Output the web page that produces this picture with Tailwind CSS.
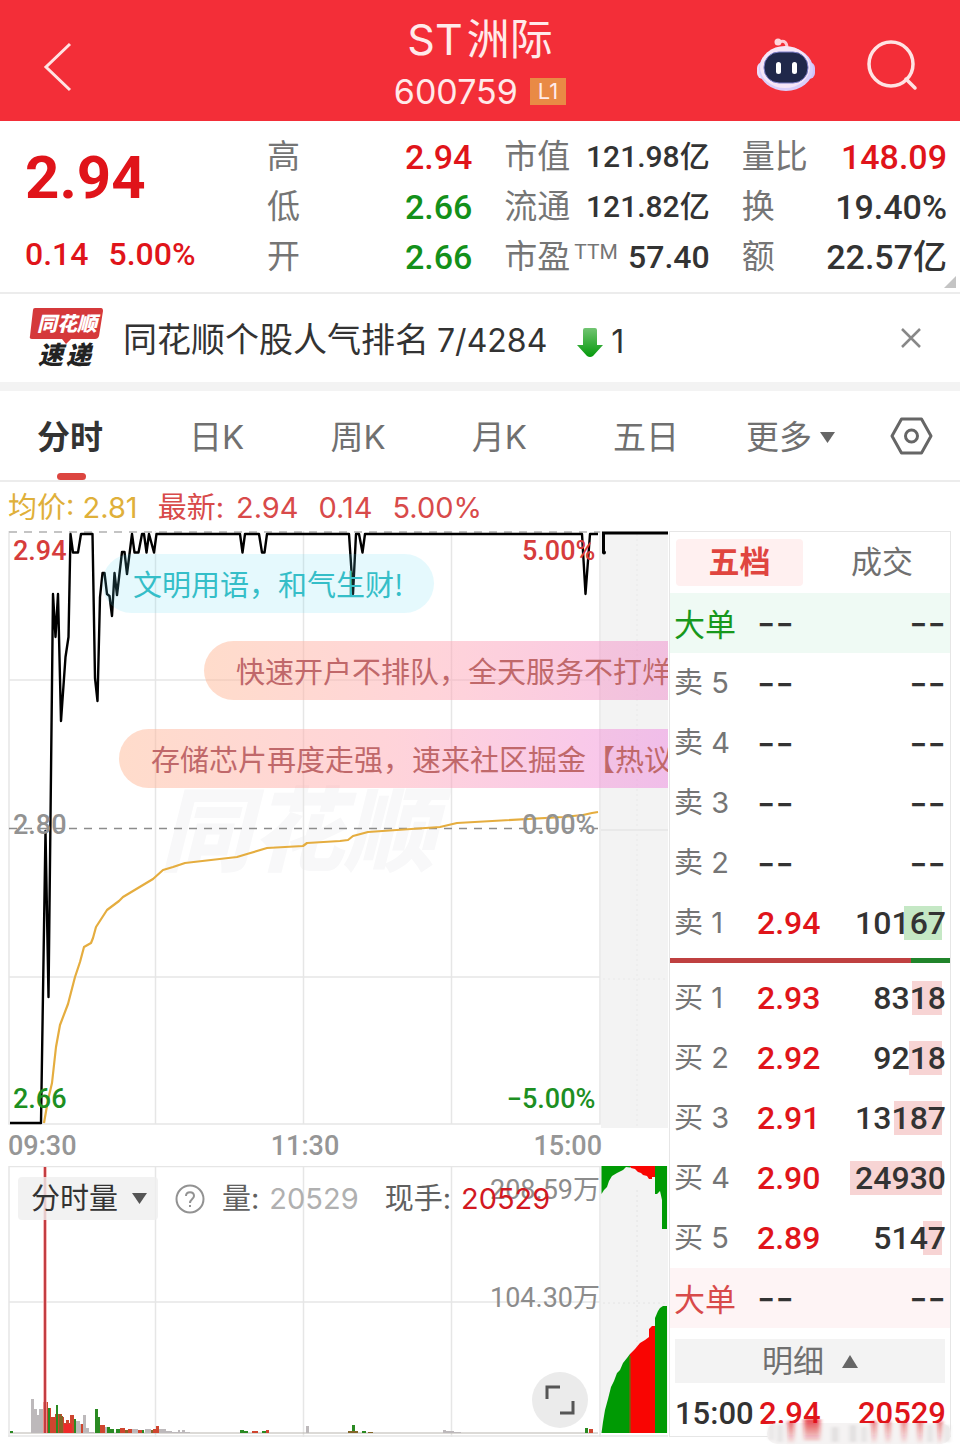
<!DOCTYPE html>
<html lang="zh-CN">
  <head>
    <meta charset="UTF-8" />
    <meta name="viewport" content="width=device-width, initial-scale=1.0" />
    <title>ST洲际 600759</title>

    <script src="https://cdn.jsdelivr.net/npm/@tailwindcss/browser@4"></script>
  </head>
  <body class="bg-white font-['Inter','Noto_Sans_CJK_SC',sans-serif] text-[#333]">
    <!-- Header -->
    <header class="grid h-[121px] grid-cols-[1fr_auto_1fr] items-center bg-[#f32e38] text-white">
      <button aria-label="返回" class="ml-[42px] mt-3 justify-self-start">
        <svg width="32" height="52" viewBox="0 0 32 52" fill="none" stroke="#ffe3e3" stroke-width="3"><path d="M28 3 4 26 28 49" /></svg>
      </button>
      <div class="flex flex-col items-center pt-2 text-[#ffeaea]">
        <h1 class="text-[43px] leading-[54px]">ST<span class="ml-1">洲际</span></h1>
        <div class="flex items-center gap-3">
          <span class="text-[34px] leading-[52px]">600759</span>
          <span class="bg-[#e98a45] px-2 text-[22px] leading-[27px]">L1</span>
        </div>
      </div>
      <div class="mt-2 mr-[42px] flex items-center gap-[50px] justify-self-end">
        <button aria-label="智能助手">
          <svg width="60" height="56" viewBox="0 0 60 56">
            <path d="M23 5C29 3 31 6 31 11" fill="none" stroke="#ffc9d4" stroke-width="3" />
            <circle cx="22" cy="5" r="3.5" fill="#ffd5dc" />
            <rect x="1" y="25" width="12" height="17" rx="6" fill="#eedcf8" />
            <rect x="47" y="25" width="12" height="17" rx="6" fill="#cfc3fb" />
            <ellipse cx="30" cy="32" rx="27" ry="22" fill="#d9cffb" />
            <ellipse cx="29" cy="30" rx="25" ry="21" fill="#f6e6f7" />
            <rect x="8" y="15" width="44" height="31" rx="15" fill="#20284a" stroke="#7d7fc9" stroke-width="1" />
            <rect x="20" y="25" width="5" height="12" rx="2.5" fill="#fff" />
            <rect x="36" y="25" width="5" height="12" rx="2.5" fill="#fff" />
          </svg>
        </button>
        <button aria-label="搜索">
          <svg width="52" height="52" viewBox="0 0 52 52" fill="none" stroke="#ffe3e3" stroke-width="3.5"><circle cx="25" cy="25" r="22" /><path d="m40 40 9 9" stroke-linecap="round" /></svg>
        </button>
      </div>
    </header>

    <!-- Quote -->
    <section class="relative grid h-[173px] grid-cols-[210px_1fr_1fr_1fr] gap-x-8 border-b-2 border-[#ececec] pt-[11px] pr-[13px] pl-[25px] font-['Roboto','Noto_Sans_CJK_SC',sans-serif] font-medium">
      <div class="flex flex-col gap-6 pt-[14px] text-[#e0141a]">
        <strong class="text-[60px] leading-[64px] font-bold">2.94</strong>
        <p class="flex gap-5 text-[32px] leading-[40px]"><span>0.14</span><span>5.00%</span></p>
      </div>
      <dl class="text-[34px] leading-[50px]">
        <div class="flex justify-between"><dt class="text-[33px] font-normal text-[#757575]">高</dt><dd class="text-[#e0141a]">2.94</dd></div>
        <div class="flex justify-between"><dt class="text-[33px] font-normal text-[#757575]">低</dt><dd class="text-[#13901a]">2.66</dd></div>
        <div class="flex justify-between"><dt class="text-[33px] font-normal text-[#757575]">开</dt><dd class="text-[#13901a]">2.66</dd></div>
      </dl>
      <dl class="text-[30px] leading-[50px]">
        <div class="flex justify-between whitespace-nowrap"><dt class="text-[33px] font-normal text-[#757575]">市值</dt><dd>121.98亿</dd></div>
        <div class="flex justify-between whitespace-nowrap"><dt class="text-[33px] font-normal text-[#757575]">流通</dt><dd>121.82亿</dd></div>
        <div class="flex justify-between whitespace-nowrap"><dt class="flex text-[33px] font-normal text-[#757575]">市盈<span class="ml-1 text-[21px] leading-[40px]">TTM</span></dt><dd class="text-[32px]">57.40</dd></div>
      </dl>
      <dl class="text-[34px] leading-[50px]">
        <div class="flex justify-between"><dt class="text-[33px] font-normal text-[#757575]">量比</dt><dd class="text-[#e0141a]">148.09</dd></div>
        <div class="flex justify-between"><dt class="text-[33px] font-normal text-[#757575]">换</dt><dd>19.40%</dd></div>
        <div class="flex justify-between"><dt class="text-[33px] font-normal text-[#757575]">额</dt><dd>22.57亿</dd></div>
      </dl>
      <svg class="absolute right-1 bottom-1" width="12" height="12" viewBox="0 0 12 12"><path d="M12 0V12H0Z" fill="#c4c4c4" /></svg>
    </section>

    <!-- Popularity notice -->
    <section class="flex h-[97px] items-center border-b-[9px] border-[#f3f3f3] pr-[38px] pl-[29px]">
      <svg width="76" height="68" viewBox="0 0 76 68" class="mr-[18px] overflow-visible font-['Noto_Sans_CJK_SC'] font-black italic">
        <path d="M6 4H72Q74 4 74 7L70 32Q69 35 66 35H42L37 40 33 35H3Q0 35 1 32L4 6Q4 4 6 4Z" fill="#d5393b" />
        <text x="8" y="27" font-size="20" fill="#fff">同花顺</text>
        <text x="9" y="60" font-size="25" fill="#222">速</text>
        <text x="37" y="60" font-size="25" fill="#222">递</text>
      </svg>
      <p class="pt-1 text-[34px] leading-[44px] whitespace-nowrap">同花顺个股人气排名<span class="ml-2 text-[32px]">7/4284</span></p>
      <svg class="mt-2 mr-2 ml-[30px]" width="26" height="31" viewBox="0 0 26 31">
        <defs><linearGradient id="drop" x2="0" y2="1"><stop stop-color="#72c472" /><stop offset="1" stop-color="#059a0b" /></linearGradient></defs>
        <path d="M6 3Q6 1 8 1H18Q20 1 20 3V18H26L16 29Q13 31 10 29L0 18H6Z" fill="url(#drop)" />
      </svg>
      <span class="mt-2 text-[32px]">1</span>
      <button aria-label="关闭" class="ml-auto">
        <svg width="22" height="22" viewBox="0 0 22 22" stroke="#888" stroke-width="2.5"><path d="m2 2 18 18M20 2 2 20" /></svg>
      </button>
    </section>

    <!-- Period tabs -->
    <nav class="flex h-[91px] items-center border-b-2 border-[#ececec] pr-[27px] pl-[37px] text-[33px] text-[#707070]">
      <div class="flex flex-1 justify-between pt-1">
        <button class="relative font-bold text-[#333]">分时<span class="absolute -bottom-[18px] left-5 h-[7px] w-[29px] rounded-full bg-[#dc4540]"></span></button>
        <button>日K</button>
        <button>周K</button>
        <button>月K</button>
        <button>五日</button>
      </div>
      <button class="ml-[67px] flex items-center gap-2 pt-1">更多<svg width="15" height="11" viewBox="0 0 15 11"><path d="M0 0H15L7.500 11Z" fill="#666" /></svg></button>
      <button aria-label="设置" class="ml-[55px]">
        <svg width="43" height="38" viewBox="0 0 43 38" fill="none" stroke="#666" stroke-width="3" stroke-linejoin="round"><path d="M11.500 2H31.500L41 19 31.500 36H11.500L2 19Z" /><circle cx="21.500" cy="19" r="6" /></svg>
      </button>
    </nav>

    <!-- Legend -->
    <p class="flex h-[49px] items-center pl-2 pt-[2px] text-[29px] text-[#d84a4a]">
      <span class="text-[#dfb03a]">均价: 2.81</span>
      <span class="ml-5">最新:</span>
      <span class="ml-3">2.94</span>
      <span class="ml-5">0.14</span>
      <span class="ml-5">5.00%</span>
    </p>

    <main class="flex pr-[9px] pb-5 pl-2">
      <div class="min-w-0 flex-1">
        <!-- Price chart -->
        <div class="relative overflow-hidden font-['Roboto'] text-[27px] leading-8">
          <span class="absolute top-[238px] left-[23%] font-['Noto_Sans_CJK_SC'] text-[92px] leading-[110px] font-black whitespace-nowrap text-[#f8f8f9] italic">同花顺</span>
          <svg class="relative block h-[597px] w-full" viewBox="8 531 660 597" preserveAspectRatio="none" fill="none">
            <rect x="601" y="531" width="67" height="597" fill="#f3f3f3" />
            <path d="M9 531V1124H600V531M155.500 531V1124M303.500 531V1124M451.500 531V1124M9 680H600M9 977H600M601 830H668" stroke="#e6e6e6" stroke-width="1.500" />
            <path d="M637 534V1127M603 680H668M603 979H668" stroke="#e9e9e9" stroke-dasharray="2 3" />
            <path d="M9 532H600" stroke="#c4c4c4" stroke-width="2" stroke-dasharray="8 7" />
            <path d="M9 828.500H598" stroke="#8c8c8c" stroke-width="1.500" stroke-dasharray="8 7" />
            <path d="M44 1123 48 1100 52 1083 56 1047 60 1025 68 1004 75 977 80 962 84 947 91 943 93 938 96 927 107 910 119 901 123 897 153 879 163 870 173 867 185 863 237 857 247 854 267 848 303 846 307 843 340 841 348 840 353 836 368 832 440 827 457 823 563 817 583 815 592 813 598 812" stroke="#e5ad3f" stroke-width="2.200" stroke-linejoin="round" />
            <path d="M10 1123H41L45.500 831 48.500 997 53 594 55.500 637 58 594 61 721 65.500 657 68.500 637 70.500 534 73 552.500H78L81 534H92.500L95 678 97.500 701 100 597 102.500 573H104.500L107 594 109.500 596 112 616 114.500 573 117 595 122 552H124.500L127 574 132 534 134.500 552.500H138.500L142 534H144L146.500 552.500 149 534 154 552.500 156.500 534H240L242.500 552.500 245 534H259L262 552.500H264.500L267 534H349L353 594 356 534H359L362.500 552.500 365 534H582L585.500 594 590 534H598" stroke="#000" stroke-width="2.400" stroke-linejoin="round" />
            <path d="M603.500 553V533H668" stroke="#000" stroke-width="3" />
            <circle cx="604" cy="552.500" r="2" fill="#000" />
          </svg>
          <span class="absolute top-[4px] left-[5px] font-medium text-[#d63c3c]">2.94</span>
          <span class="absolute top-[278px] left-[5px] font-medium text-[#929292]">2.80</span>
          <span class="absolute top-[552px] left-[5px] font-medium text-[#1d8f22]">2.66</span>
          <span class="absolute top-[4px] right-[11%] font-medium text-[#d63c3c]">5.00%</span>
          <span class="absolute top-[278px] right-[11%] font-medium text-[#929292]">0.00%</span>
          <span class="absolute top-[552px] right-[11%] font-medium text-[#1d8f22]">−5.00%</span>

          <!-- Floating comments -->
          <p class="absolute top-[23px] left-[94px] rounded-full bg-[#5fdcf0]/16 px-[31px] font-['Noto_Sans_CJK_SC'] text-[29px] leading-[59px] whitespace-nowrap text-[#35bec8]">文明用语，和气生财!</p>
          <p class="absolute top-[110px] right-0 left-[196px] overflow-hidden rounded-l-full bg-linear-to-r from-[#ffb997]/50 via-[#ffa8b4]/50 to-[#f08ccc]/50 pl-[32px] font-['Noto_Sans_CJK_SC'] text-[29px] leading-[59px] whitespace-nowrap text-[#c0686a]">快速开户不排队，全天服务不打烊</p>
          <p class="absolute top-[198px] right-0 left-[111px] overflow-hidden rounded-l-full bg-linear-to-r from-[#ffb997]/50 via-[#ffa8b4]/50 to-[#ee88e0]/50 pl-[32px] font-['Noto_Sans_CJK_SC'] text-[29px] leading-[59px] whitespace-nowrap text-[#c0686a]">存储芯片再度走强，速来社区掘金【热议</p>
        </div>

        <div class="flex h-[38px] w-[90%] justify-between font-['Roboto'] text-[27px] leading-[36px] font-medium text-[#969696]">
          <span>09:30</span><span>11:30</span><span>15:00</span>
        </div>

        <!-- Volume chart -->
        <div class="relative font-['Roboto','Noto_Sans_CJK_SC',sans-serif]">
          <svg class="block h-[271px] w-full" viewBox="8 1166 660 271" preserveAspectRatio="none" fill="none">
            <rect x="601" y="1166" width="67" height="267" fill="#f3f3f3" />
            <path d="M9 1437V1166.500H600V1437M155.500 1166V1437M303.500 1166V1437M451.500 1166V1437M9 1302H600M8 1436H668" stroke="#e6e6e6" stroke-width="1.500" />
            <path d="M637 1190V1370M603 1303H668" stroke="#e4e4e4" stroke-dasharray="2 3" />
            <path d="M10 1433H598" stroke="#b9b5ae" />
            <path d="M31 1433V1399H34V1409H37V1415H39V1409H43V1433ZM76 1433V1421H80V1424H83V1415H86V1428H89V1432H94V1433ZM105 1433V1427H107V1433ZM132 1433V1429H138V1433ZM145 1433V1429H151V1433ZM159 1433V1429H166V1431H172V1432H178V1430H180V1432H182V1430H185V1432H190V1433ZM306 1433V1426H309V1433ZM443 1433V1430H446V1431H454V1432H461V1433Z" fill="#bdb9bb" />
            <path d="M43 1433V1402H48V1408H51V1417H55V1414H58V1414H62V1417H64V1423H66V1420H69V1423H70V1415H74V1433ZM81 1433V1424H83V1433ZM100 1433V1425H105V1433ZM120 1433V1428H125V1433ZM128 1433V1429H132V1433ZM138 1433V1430H142V1433ZM153 1433V1429H156V1426H159V1433ZM252 1433V1431H258V1433ZM266 1433V1430H269V1433ZM589 1433V1429H593V1433Z" fill="#cf452f" />
            <path d="M64 1433V1424H72V1433Z" fill="#ee2b2b" />
            <path d="M48 1433V1408H50V1433ZM56 1433V1405H58V1433ZM74 1433V1419H76V1433ZM95 1433V1409H98V1417H100V1433ZM107 1433V1427H110V1429H114V1433ZM10 1433V1431H13V1433ZM116 1433V1429H120V1433ZM142 1433V1430H144V1433ZM240 1433V1430H244V1431H248V1433ZM262 1433V1431H266V1433ZM352 1433V1425H355V1433ZM362 1433V1431H366V1433ZM585 1433V1428H588V1433Z" fill="#2a8a22" />
            <path d="M59 1433V1414H61V1416H63V1433ZM125 1433V1430H128V1433ZM151 1433V1430H153V1433ZM348 1433V1431H358V1433ZM368 1433V1432H373V1433Z" fill="#836628" />
            <path d="M45 1167V1433" stroke="#f6a5a5" stroke-width="3.500" />
            <path d="M45 1167V1433" stroke="#c33d42" stroke-width="2" />
            <!-- Closing auction -->
            <path d="M601.500 1433 603 1422 605 1410 608 1399 611 1387 614 1381 617 1373 620 1370 623 1363 627 1358 630 1354V1433Z" fill="#009a04" />
            <path d="M630 1354 635 1349 640 1343 645 1340 649 1337V1329L652 1326H655V1433H630Z" fill="#f90502" />
            <path d="M655 1433V1318L658 1311 660 1308 663 1306H667V1433Z" fill="#009a04" />
            <path d="M630 1356V1433" stroke="#7c5c10" stroke-width="1.500" />
            <path d="M601.500 1166H633L630 1167.500 626 1167 623 1170 617 1173 612 1176 609 1181 607 1187 604 1190 601.500 1194Z" fill="#009a04" />
            <path d="M630 1166H655V1177H652V1179H649L647 1176 643 1175 641 1173 638 1172 635 1169 631 1168Z" fill="#f90502" />
            <path d="M655 1166H667V1229H662V1200L660 1191 657 1194H655Z" fill="#009a04" />
          </svg>
          <span class="absolute top-[8px] right-[68px] text-[27px] leading-8 text-[#8c8c8c]">208.59万</span>
          <span class="absolute top-[116px] right-[68px] text-[27px] leading-8 text-[#8c8c8c]">104.30万</span>
          <div class="absolute top-[11px] left-[10px] flex items-center font-['Inter','Noto_Sans_CJK_SC',sans-serif] text-[29px] leading-[43px] whitespace-nowrap">
            <label class="relative mr-[17px] block">
              <select aria-label="副图指标" class="h-[43px] w-[140px] appearance-none rounded bg-[#efefef]/80 pl-[13px]">
                <option>分时量</option>
              </select>
              <svg class="pointer-events-none absolute top-4 right-[11px]" width="15" height="11" viewBox="0 0 15 11"><path d="M0 0H15L7.500 11Z" fill="#555" /></svg>
            </label>
            <button aria-label="帮助" class="mr-[17px]">
              <svg width="30" height="30" viewBox="0 0 30 30" fill="none" stroke="#929292" stroke-width="2"><circle cx="15" cy="15" r="13.500" /><path d="M11 12C11 7 19 7 19 12C19 15 15 15 15 19M15 21V23" /></svg>
            </button>
            <span class="text-[#606060]">量:</span>
            <output class="ml-[10px] text-[#b0b0b0]">20529</output>
            <span class="ml-[26px] text-[#606060]">现手:</span>
            <output class="ml-[10px] text-[#d2191f]">20529</output>
          </div>
          <button aria-label="全屏" class="absolute right-[80px] bottom-[9px] flex size-14 items-center justify-center rounded-full bg-[#ebebeb]">
            <svg width="30" height="30" viewBox="0 0 30 30" fill="none" stroke="#555" stroke-width="3"><path d="M2 14V2H15M28 16V28H15" /></svg>
          </button>
        </div>
      </div>

      <!-- Order book -->
      <aside class="relative ml-px w-[282px] shrink-0 border border-[#e6e6e6]">
        <div class="flex h-[61px] items-center justify-between pr-[37px] pl-[6px] text-[31px] text-[#707070]">
          <button class="h-[47px] w-[127px] rounded bg-[#fff0f0] font-bold text-[#e0453f]">五档</button>
          <button>成交</button>
        </div>
        <table class="w-full font-['Roboto'] text-[32px] leading-[40px] font-medium">
          <tbody>
            <tr class="h-[60px] bg-[#effaf4]">
              <th scope="row" class="w-[87px] pl-1 text-left font-['Noto_Sans_CJK_SC'] text-[31px] font-normal text-[#17981c]">大单</th>
              <td class="font-['Inter'] text-[40px] font-normal">--</td>
              <td class="pr-1 text-right font-['Inter'] text-[40px] font-normal">--</td>
            </tr>
            <tr class="h-[60px]">
              <th scope="row" class="pl-1 text-left font-['Inter','Noto_Sans_CJK_SC'] text-[29px] font-normal text-[#757575]">卖 5</th>
              <td class="font-['Inter'] text-[40px] font-normal">--</td>
              <td class="pr-1 text-right font-['Inter'] text-[40px] font-normal">--</td>
            </tr>
            <tr class="h-[60px]">
              <th scope="row" class="pl-1 text-left font-['Inter','Noto_Sans_CJK_SC'] text-[29px] font-normal text-[#757575]">卖 4</th>
              <td class="font-['Inter'] text-[40px] font-normal">--</td>
              <td class="pr-1 text-right font-['Inter'] text-[40px] font-normal">--</td>
            </tr>
            <tr class="h-[60px]">
              <th scope="row" class="pl-1 text-left font-['Inter','Noto_Sans_CJK_SC'] text-[29px] font-normal text-[#757575]">卖 3</th>
              <td class="font-['Inter'] text-[40px] font-normal">--</td>
              <td class="pr-1 text-right font-['Inter'] text-[40px] font-normal">--</td>
            </tr>
            <tr class="h-[60px]">
              <th scope="row" class="pl-1 text-left font-['Inter','Noto_Sans_CJK_SC'] text-[29px] font-normal text-[#757575]">卖 2</th>
              <td class="font-['Inter'] text-[40px] font-normal">--</td>
              <td class="pr-1 text-right font-['Inter'] text-[40px] font-normal">--</td>
            </tr>
            <tr class="h-[60px]">
              <th scope="row" class="pl-1 text-left font-['Inter','Noto_Sans_CJK_SC'] text-[29px] font-normal text-[#757575]">卖 1</th>
              <td class="text-[#e0141a]">2.94</td>
              <td class="relative pr-1 text-right"><span class="absolute top-[13px] right-2 h-[34px] w-[38px] bg-[#c5e8c5]"></span><span class="relative">10167</span></td>
            </tr>
            <tr class="h-[15px]">
              <td colspan="3"><div class="flex h-[5px]"><span class="flex-1 bg-[#bf4040]"></span><span class="w-[14%] bg-[#20842a]"></span></div></td>
            </tr>
            <tr class="h-[60px]">
              <th scope="row" class="pl-1 text-left font-['Inter','Noto_Sans_CJK_SC'] text-[29px] font-normal text-[#757575]">买 1</th>
              <td class="text-[#e0141a]">2.93</td>
              <td class="relative pr-1 text-right"><span class="absolute top-[13px] right-2 h-[34px] w-[30px] bg-[#f7d4d4]"></span><span class="relative">8318</span></td>
            </tr>
            <tr class="h-[60px]">
              <th scope="row" class="pl-1 text-left font-['Inter','Noto_Sans_CJK_SC'] text-[29px] font-normal text-[#757575]">买 2</th>
              <td class="text-[#e0141a]">2.92</td>
              <td class="relative pr-1 text-right"><span class="absolute top-[13px] right-2 h-[34px] w-[33px] bg-[#f7d4d4]"></span><span class="relative">9218</span></td>
            </tr>
            <tr class="h-[60px]">
              <th scope="row" class="pl-1 text-left font-['Inter','Noto_Sans_CJK_SC'] text-[29px] font-normal text-[#757575]">买 3</th>
              <td class="text-[#e0141a]">2.91</td>
              <td class="relative pr-1 text-right"><span class="absolute top-[13px] right-2 h-[34px] w-[48px] bg-[#f7d4d4]"></span><span class="relative">13187</span></td>
            </tr>
            <tr class="h-[60px]">
              <th scope="row" class="pl-1 text-left font-['Inter','Noto_Sans_CJK_SC'] text-[29px] font-normal text-[#757575]">买 4</th>
              <td class="text-[#e0141a]">2.90</td>
              <td class="relative pr-1 text-right"><span class="absolute top-[13px] right-2 h-[34px] w-[92px] bg-[#f7d4d4]"></span><span class="relative">24930</span></td>
            </tr>
            <tr class="h-[60px]">
              <th scope="row" class="pl-1 text-left font-['Inter','Noto_Sans_CJK_SC'] text-[29px] font-normal text-[#757575]">买 5</th>
              <td class="text-[#e0141a]">2.89</td>
              <td class="relative pr-1 text-right"><span class="absolute top-[13px] right-2 h-[34px] w-[19px] bg-[#f7d4d4]"></span><span class="relative">5147</span></td>
            </tr>
            <tr class="h-[60px] bg-[#fef4f5]">
              <th scope="row" class="pl-1 text-left font-['Noto_Sans_CJK_SC'] text-[31px] font-normal text-[#d84a4a]">大单</th>
              <td class="font-['Inter'] text-[40px] font-normal">--</td>
              <td class="pr-1 text-right font-['Inter'] text-[40px] font-normal">--</td>
            </tr>
          </tbody>
        </table>
        <button class="mx-[5px] mt-[11px] flex h-[44px] w-[270px] items-center justify-center gap-[18px] bg-[#f3f3f3] text-[31px] text-[#707070]">
          明细<svg width="16" height="13" viewBox="0 0 16 13"><path d="M0 13H16L8 0Z" fill="#666" /></svg>
        </button>
        <p class="mt-[9px] flex justify-between pr-1 pl-[5px] font-['Roboto'] text-[31px] leading-[44px] font-medium text-[#e0141a]"><span class="text-[#333]">15:00</span><span class="mr-8">2.94</span><span>20529</span></p>
        <!-- Smudge over the last row -->
        <svg class="absolute -right-1 -bottom-[9px]" width="190" height="26" viewBox="0 0 190 26">
          <defs>
            <linearGradient id="red" x2="0" y2="1"><stop stop-color="#e0141a" stop-opacity=".8" /><stop offset="1" stop-color="#e0141a" stop-opacity=".05" /></linearGradient>
            <filter id="soft"><feGaussianBlur stdDeviation="2 1" /></filter>
          </defs>
          <rect x="3" y="4" width="184" height="21" rx="10" fill="#f5f3f3" />
          <g filter="url(#soft)">
            <path d="M24 2H30V24H24ZM40 0H56V22H40ZM108 2H112V24H108ZM122 2H126V24H122ZM138 2H142V24H138ZM154 2H158V24H154ZM174 2H178V24H174Z" fill="url(#red)" />
            <path d="M6 5H9V21H6ZM14 6H18V23H14ZM68 8H74V23H68ZM86 6H92V23H86ZM98 8H102V23H98ZM164 6H168V23H164ZM182 6H185V23H182Z" fill="#e0dede" />
          </g>
        </svg>
      </aside>
    </main>
  </body>
</html>
